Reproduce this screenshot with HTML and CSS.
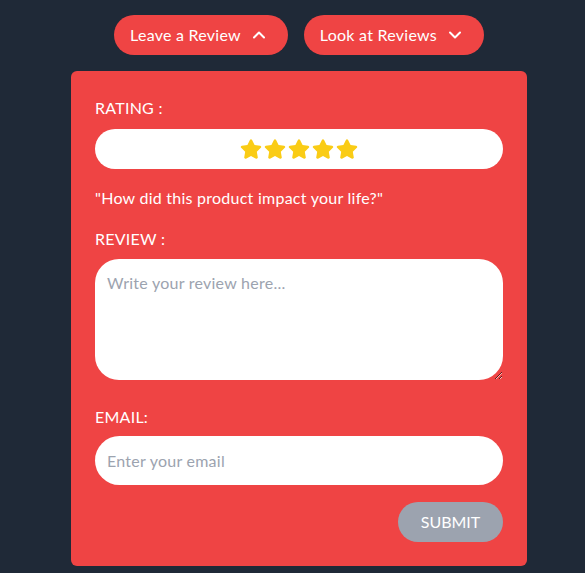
FILE: index.html
```html
<!DOCTYPE html>
<html lang="en">
<head>
<meta charset="utf-8">
<title>Leave a Review</title>
<link rel="stylesheet" href="styles.css">
</head>
<body>
<div class="page">
  <div class="tabs">
    <button class="tab tab-leave" type="button">
      <span>Leave a Review</span>
      <svg class="chev" viewBox="0 0 24 24" fill="none" stroke="currentColor" stroke-width="3" stroke-linecap="round" stroke-linejoin="round"><path d="M4.5 15.75l7.5-7.5 7.5 7.5"/></svg>
    </button>
    <button class="tab tab-look" type="button">
      <span>Look at Reviews</span>
      <svg class="chev" viewBox="0 0 24 24" fill="none" stroke="currentColor" stroke-width="3" stroke-linecap="round" stroke-linejoin="round"><path d="M19.5 8.25l-7.5 7.5-7.5-7.5"/></svg>
    </button>
  </div>

  <form class="card">
    <label class="label">RATING :</label>
    <div class="rating">
      <svg class="star" viewBox="0 0 576 512"><path d="M259.3 17.8L194 150.2 47.9 171.5c-26.2 3.8-36.7 36.1-17.7 54.6l105.7 103-25 145.5c-4.5 26.3 23.2 46 46.4 33.7L288 439.6l130.7 68.7c23.2 12.2 50.9-7.4 46.4-33.7l-25-145.5 105.7-103c19-18.5 8.5-50.8-17.7-54.6L382 150.2 316.7 17.8c-11.7-23.6-45.6-23.9-57.4 0z"/></svg>
      <svg class="star" viewBox="0 0 576 512"><path d="M259.3 17.8L194 150.2 47.9 171.5c-26.2 3.8-36.7 36.1-17.7 54.6l105.7 103-25 145.5c-4.5 26.3 23.2 46 46.4 33.7L288 439.6l130.7 68.7c23.2 12.2 50.9-7.4 46.4-33.7l-25-145.5 105.7-103c19-18.5 8.5-50.8-17.7-54.6L382 150.2 316.7 17.8c-11.7-23.6-45.6-23.9-57.4 0z"/></svg>
      <svg class="star" viewBox="0 0 576 512"><path d="M259.3 17.8L194 150.2 47.9 171.5c-26.2 3.8-36.7 36.1-17.7 54.6l105.7 103-25 145.5c-4.5 26.3 23.2 46 46.4 33.7L288 439.6l130.7 68.7c23.2 12.2 50.9-7.4 46.4-33.7l-25-145.5 105.7-103c19-18.5 8.5-50.8-17.7-54.6L382 150.2 316.7 17.8c-11.7-23.6-45.6-23.9-57.4 0z"/></svg>
      <svg class="star" viewBox="0 0 576 512"><path d="M259.3 17.8L194 150.2 47.9 171.5c-26.2 3.8-36.7 36.1-17.7 54.6l105.7 103-25 145.5c-4.5 26.3 23.2 46 46.4 33.7L288 439.6l130.7 68.7c23.2 12.2 50.9-7.4 46.4-33.7l-25-145.5 105.7-103c19-18.5 8.5-50.8-17.7-54.6L382 150.2 316.7 17.8c-11.7-23.6-45.6-23.9-57.4 0z"/></svg>
      <svg class="star" viewBox="0 0 576 512"><path d="M259.3 17.8L194 150.2 47.9 171.5c-26.2 3.8-36.7 36.1-17.7 54.6l105.7 103-25 145.5c-4.5 26.3 23.2 46 46.4 33.7L288 439.6l130.7 68.7c23.2 12.2 50.9-7.4 46.4-33.7l-25-145.5 105.7-103c19-18.5 8.5-50.8-17.7-54.6L382 150.2 316.7 17.8c-11.7-23.6-45.6-23.9-57.4 0z"/></svg>
    </div>
    <p class="prompt">"How did this product impact your life?"</p>
    <label class="label" for="review">REVIEW :</label>
    <textarea id="review" class="review" placeholder="Write your review here..."></textarea>
    <label class="label label-email" for="email">EMAIL:</label>
    <input id="email" class="email" type="email" placeholder="Enter your email">
    <div class="actions">
      <button class="submit" type="button">SUBMIT</button>
    </div>
  </form>
</div>
</body>
</html>
```

FILE: styles.css
```css
* { box-sizing: border-box; }

html, body {
  margin: 0;
  background: #1f2937;
}

body {
  font-family: "Segoe UI", Lato, "Open Sans", sans-serif;
  font-size: 16px;
  line-height: 24px;
  letter-spacing: 0.25px;
  color: #ffffff;
}

.page {
  display: flex;
  flex-direction: column;
  align-items: center;
  padding: 15px 0 0 13px;
}

.tabs {
  display: flex;
  gap: 16px;
}

.tab {
  display: flex;
  align-items: center;
  gap: 10px;
  height: 40px;
  padding: 0 21px 0 16px;
  border: none;
  border-radius: 9999px;
  background: #ef4444;
  color: #ffffff;
  font: inherit;
  letter-spacing: inherit;
}

.chev {
  width: 16px;
  height: 16px;
}

.card {
  width: 456px;
  margin-top: 16px;
  padding: 24px;
  background: #ef4444;
  border-radius: 6px;
  display: flex;
  flex-direction: column;
}

.label {
  display: block;
  height: 24px;
  padding-top: 1px;
}

.rating {
  margin-top: 10px;
  height: 40px;
  background: #ffffff;
  border-radius: 9999px;
  display: flex;
  align-items: center;
  justify-content: center;
  gap: 2px;
}

.star {
  width: 22px;
  height: 20px;
  fill: #facc15;
}

.prompt {
  margin: 16px 0 17px;
  padding-top: 1px;
  height: 24px;
}

.review {
  margin-top: 9px;
  height: 121px;
  border: none;
  border-radius: 24px;
  padding: 12px;
  font: inherit;
  letter-spacing: inherit;
  color: #111827;
  background: #ffffff;
  outline: none;
}

.label-email {
  margin-top: 24px;
}

.email {
  margin-top: 8px;
  height: 49px;
  border: none;
  border-radius: 9999px;
  padding: 0 12px;
  font: inherit;
  letter-spacing: inherit;
  color: #111827;
  background: #ffffff;
  outline: none;
}

.review::placeholder,
.email::placeholder {
  color: #9ca3af;
}

.actions {
  display: flex;
  justify-content: flex-end;
  margin-top: 17px;
}

.submit {
  height: 40px;
  width: 105px;
  padding: 0;
  border: none;
  border-radius: 9999px;
  background: #9ca3af;
  color: #ffffff;
  font: inherit;
  letter-spacing: 0;
}
```
